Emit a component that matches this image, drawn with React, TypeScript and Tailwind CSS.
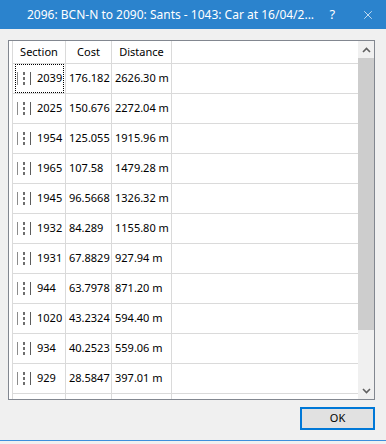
import { X } from "lucide-react";

const rows = [
  ["2039", "176.182", "2626.30 m"],
  ["2025", "150.676", "2272.04 m"],
  ["1954", "125.055", "1915.96 m"],
  ["1965", "107.58", "1479.28 m"],
  ["1945", "96.5668", "1326.32 m"],
  ["1932", "84.289", "1155.80 m"],
  ["1931", "67.8829", "927.94 m"],
  ["944", "63.7978", "871.20 m"],
  ["1020", "43.2324", "594.40 m"],
  ["934", "40.2523", "559.06 m"],
  ["929", "28.5847", "397.01 m"],
  ["", "", ""],
];

const RouteIcon = () => (
  <div className="flex items-center h-[13px] pl-[1px]">
    <span className="w-[1px] h-[13px] bg-[#8c8c8c]" />
    <span className="ml-[5px] w-[2px] h-[13px] flex flex-col justify-between">
      <span className="h-[3px] bg-[#6e6e6e]" />
      <span className="h-[3px] bg-[#6e6e6e]" />
      <span className="h-[3px] bg-[#6e6e6e]" />
    </span>
    <span className="ml-[5px] w-[1px] h-[13px] bg-[#5c5c5c]" />
  </div>
);

const Chevron = ({ down }: { down?: boolean }) => (
  <svg width="9" height="6" viewBox="0 0 9 6">
    <polyline
      points={down ? "1,1 4.5,4.5 8,1" : "1,5 4.5,1.5 8,5"}
      fill="none"
      stroke="#606060"
      strokeWidth="1.6"
    />
  </svg>
);

export default function App() {
  return (
    <div
      className="w-[386px] h-[444px] bg-[#f0f0f0] flex flex-col overflow-hidden"
      style={{ fontFamily: '"Noto Sans", sans-serif' }}
    >
      {/* Title bar */}
      <div className="h-[29px] shrink-0 bg-[#2b83cd] flex items-center text-white text-[12px]">
        <span className="pl-[27px] flex-1 whitespace-nowrap">
          2096: BCN-N to 2090: Sants - 1043: Car at 16/04/2...
        </span>
        <span className="w-[46px] text-center text-[13px]">?</span>
        <span className="w-[45px] flex justify-center">
          <X size={14} strokeWidth={1.2} />
        </span>
      </div>

      {/* List panel */}
      <div className="ml-[8px] mt-[11px] w-[367px] h-[360px] shrink-0 border border-[#828790] bg-white flex">
        <div className="flex-1 pl-[3px] overflow-hidden text-[11px] text-black">
          <div className="flex h-[23px] border-b border-[#dadada]">
            <div className="w-[53px] border-l border-[#dadada] flex items-center justify-center">Section</div>
            <div className="w-[46px] border-l border-[#dadada] flex items-center justify-center">Cost</div>
            <div className="w-[61px] border-x border-[#dadada] flex items-center justify-center">Distance</div>
          </div>
          {rows.map((r, i) => (
            <div key={i} className="flex h-[30px] shrink-0 border-b border-[#dadada]">
              <div className="w-[53px] border-l border-[#dadada] py-0">
                <div
                  className={
                    "ml-[2px] w-[49px] h-full border border-dotted flex items-center " +
                    (i === 0 ? "border-black" : "border-transparent")
                  }
                >
                  {r[0] && <RouteIcon />}
                  <span className="ml-[6px]">{r[0]}</span>
                </div>
              </div>
              <div className="w-[46px] border-l border-[#dadada] flex items-center pl-[3px]">{r[1]}</div>
              <div className="w-[61px] border-x border-[#dadada] flex items-center pl-[3px] whitespace-nowrap">{r[2]}</div>
            </div>
          ))}
        </div>

        {/* Scrollbar */}
        <div className="w-[16px] bg-[#f0f0f0] flex flex-col">
          <div className="h-[17px] flex items-center justify-center">
            <Chevron />
          </div>
          <div className="h-[272px] bg-[#cdcdcd]" />
          <div className="flex-1" />
          <div className="h-[17px] flex items-center justify-center">
            <Chevron down />
          </div>
        </div>
      </div>

      {/* Footer */}
      <div className="flex justify-end pr-[11px] mt-[7px]">
        <button className="w-[75px] h-[23px] border-2 border-[#0078d7] bg-[#e1e1e1] text-[11px] text-black flex items-center justify-center">
          OK
        </button>
      </div>
      <div className="flex-1" />
      <div className="h-[1px] bg-[#3c8fdc] mb-[3px]" />
    </div>
  );
}
